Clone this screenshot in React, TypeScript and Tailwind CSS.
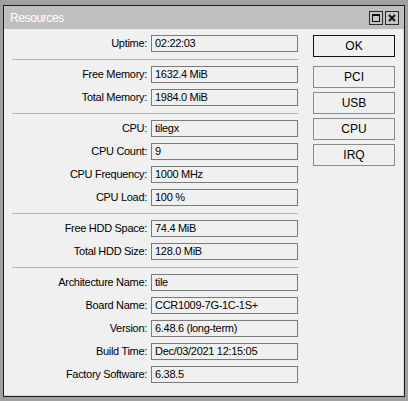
const FONT = { fontFamily: '"Liberation Sans", Arial, sans-serif' };

type Row = { label: string; value: string };

const sections: Row[][] = [
  [{ label: 'Uptime:', value: '02:22:03' }],
  [
    { label: 'Free Memory:', value: '1632.4 MiB' },
    { label: 'Total Memory:', value: '1984.0 MiB' },
  ],
  [
    { label: 'CPU:', value: 'tilegx' },
    { label: 'CPU Count:', value: '9' },
    { label: 'CPU Frequency:', value: '1000 MHz' },
    { label: 'CPU Load:', value: '100 %' },
  ],
  [
    { label: 'Free HDD Space:', value: '74.4 MiB' },
    { label: 'Total HDD Size:', value: '128.0 MiB' },
  ],
  [
    { label: 'Architecture Name:', value: 'tile' },
    { label: 'Board Name:', value: 'CCR1009-7G-1C-1S+' },
    { label: 'Version:', value: '6.48.6 (long-term)' },
    { label: 'Build Time:', value: 'Dec/03/2021 12:15:05' },
    { label: 'Factory Software:', value: '6.38.5' },
  ],
];

function Field({ label, value }: Row) {
  return (
    <div className="flex items-center h-[17px]">
      <div className="w-[135px] text-right text-black leading-none">{label}</div>
      <div className="ml-[4px] w-[147px] h-[17px] border border-[#7a7a7a] bg-[#f0f0f0] flex items-center pl-[3px] text-black leading-none">
        {value}
      </div>
    </div>
  );
}

function Button({ label, primary }: { label: string; primary?: boolean }) {
  return (
    <div
      className={
        'w-[82px] h-[22px] flex items-center justify-center bg-[#f0f0f0] text-black ' +
        (primary ? 'border border-[#111111]' : 'border border-[#8a8a8a]')
      }
    >
      <span className="text-[12px] leading-none">{label}</span>
    </div>
  );
}

export default function App() {
  return (
    <div className="w-[408px] h-[401px] bg-[#a0a0a0] pt-[5px] pl-[3px]" style={FONT}>
      <div className="w-[402px] h-[392px] border border-[#1c1c1c] bg-[#f0f0f0] flex flex-col">
        {/* title bar */}
        <div className="h-[23px] bg-[#bfbfbf] flex items-center pl-[6px] pr-[5px]">
          <span className="text-white text-[12px] tracking-[-0.4px] leading-none">Resources</span>
          <div className="ml-auto flex gap-[2px]">
            <div className="w-[14px] h-[14px] border border-[#2a2a2a] bg-[#c4c4c4] flex items-center justify-center">
              <div className="w-[8px] h-[8px] border border-[#111] border-t-2" />
            </div>
            <div className="w-[14px] h-[14px] border border-[#2a2a2a] bg-[#c4c4c4] flex items-center justify-center">
              <svg width="8" height="8" viewBox="0 0 8 8">
                <path d="M1 1 L7 7 M7 1 L1 7" stroke="#111" strokeWidth="2" />
              </svg>
            </div>
          </div>
        </div>

        {/* body */}
        <div className="flex-1 flex pl-[8px] pt-[6px] border-r border-b border-[#d4d4d4]">
          <div className="w-[286px] text-[11px] tracking-[-0.3px]">
            {sections.map((rows, i) => (
              <div key={i}>
                {i > 0 && <div className="mt-[7px] mb-[6px] h-px bg-[#b4b4b4]" />}
                <div className="flex flex-col gap-[6px]">
                  {rows.map((r) => (
                    <Field key={r.label} label={r.label} value={r.value} />
                  ))}
                </div>
              </div>
            ))}
          </div>
          <div className="ml-[15px] flex flex-col">
            <Button label="OK" primary />
            <div className="mt-[9px] flex flex-col gap-[4px]">
              <Button label="PCI" />
              <Button label="USB" />
              <Button label="CPU" />
              <Button label="IRQ" />
            </div>
          </div>
        </div>
      </div>
    </div>
  );
}
